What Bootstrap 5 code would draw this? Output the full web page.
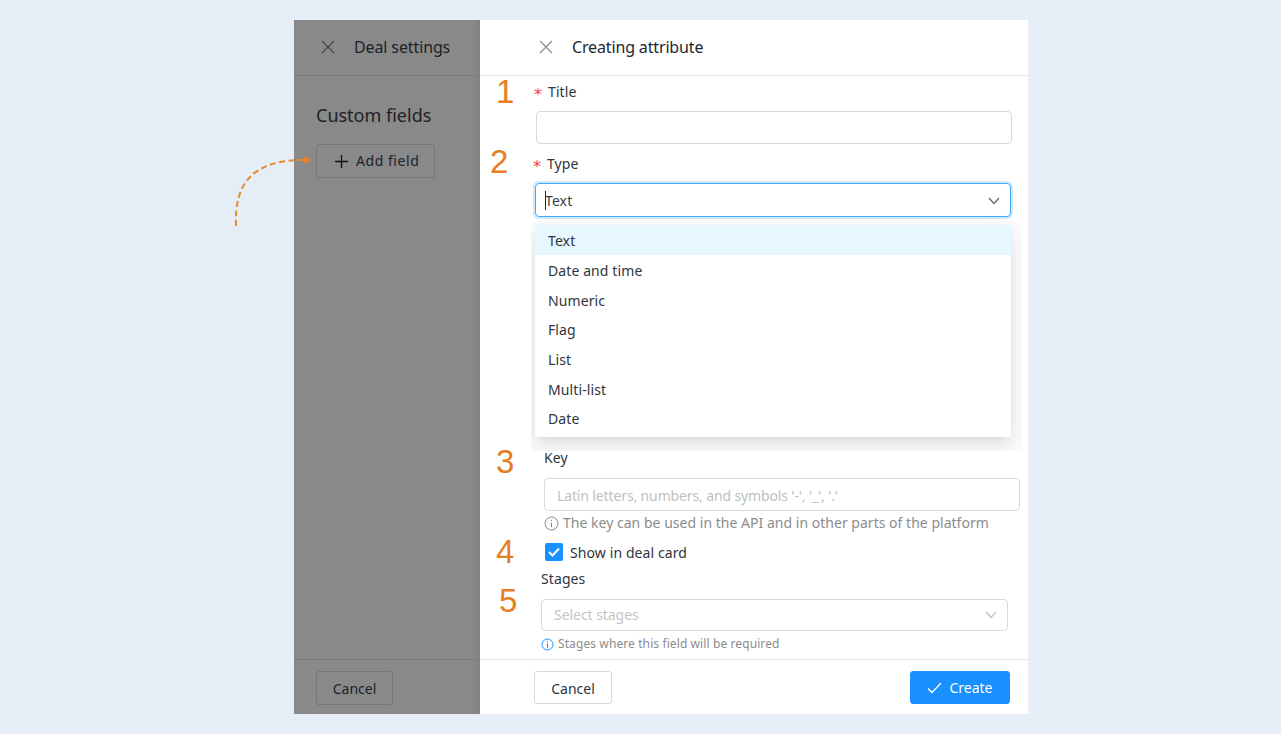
<!doctype html>
<html lang="en"><head><meta charset="utf-8"><title>Creating attribute</title>
<link href="https://cdn.jsdelivr.net/npm/bootstrap@5.3.0/dist/css/bootstrap.min.css" rel="stylesheet">
<style>
html,body{height:100%}
body{background:#e5edf7;font-family:"Noto Sans","Open Sans",sans-serif;font-size:14px;letter-spacing:.1px;color:#2b3038;overflow:hidden;position:relative}
.frame{margin:20px 0 0 294px;width:734px;height:694px}
.dim{width:186px;background:#898989;color:#1e2126;position:relative;box-shadow:inset -6px 0 8px -6px rgba(0,0,0,.12)}
.dimhead{height:56px;border-bottom:1px solid #7b7b7b;padding:0 0 2px 27px;gap:19px;font-size:16px;letter-spacing:-.12px}
.dimbody{padding:25px 22px 0;flex:1}
.dimtitle{font-size:18px;line-height:28px;margin:0 0 15px;font-weight:400;letter-spacing:0}
.btn-ghost{--bs-btn-border-color:#767676;--bs-btn-color:#1e2126;--bs-btn-hover-color:#1e2126;--bs-btn-hover-border-color:#767676;--bs-btn-border-radius:3px;--bs-btn-font-size:14px;--bs-btn-padding-y:0;height:34px;line-height:34px}
.addbtn{width:119px;padding:0 0 0 18px;gap:8px;letter-spacing:.55px}
.cancelbtn{width:77px;padding:0}
.dimfoot{height:55px;border-top:1px solid #7b7b7b;padding:11px 22px 0}
.panel{width:548px;background:#fff;position:relative}
.panelhead{height:56px;border-bottom:1px solid #e8e8e8;padding:0 0 2px 59px;gap:19px;font-size:16px;color:#23272e;letter-spacing:-.15px}
.formarea{flex:1;position:relative}
.req{color:#f5424d;font-family:"DejaVu Sans",sans-serif;font-size:16px;margin:0 6px 0 -2px;vertical-align:-3px;line-height:1;letter-spacing:0}
.lab{height:20px;line-height:22px;font-size:14px;color:#2f353d;margin:0}
.num{position:absolute;color:#e67e22;font-family:"Liberation Sans",sans-serif;font-size:33px;line-height:36px;letter-spacing:0}
.fieldbox{height:33px;border:1px solid #d9d9d9;border-radius:4px;background:#fff;padding:0 12px;line-height:33px;color:#bfbfbf}
.hintkey{letter-spacing:-.13px}
.sel1{margin-left:55px;width:476px;height:34px;border:1px solid #40a9ff;box-shadow:0 0 0 2px rgba(24,144,255,.2);border-radius:4px;padding:1px 10px 0 9px;color:#3a3f46}
.caret-bar{display:inline-block;width:1px;height:19px;background:#222;vertical-align:-4px;margin-right:-1px}
.menuclip{margin:3px 0 0 51px;width:491px;height:231px;overflow:hidden;padding:5px 15px 0 4px}
.menuwrap{width:476px;height:212px;background:#fff;box-shadow:0 3px 6px -4px rgba(0,0,0,.12),0 6px 16px rgba(0,0,0,.08),0 9px 28px 8px rgba(0,0,0,.05)}
.optrow{height:29.7px;line-height:31.7px;padding-left:13px;font-size:14px;color:#2f353d}
.optrow.on{background:#e6f7ff;height:30px}
.sub1{font-size:14px;color:#8c8c8c;line-height:22px;letter-spacing:.02px}
.sub2{font-size:12px;color:#8c8c8c;line-height:16px;letter-spacing:.1px}
.tick{width:18px;height:18px;background:#1890ff;border-radius:2px}
.panelfoot{height:55px;border-top:1px solid #e8e8e8;padding:11px 18px 0 54px}
.btn-plain{--bs-btn-border-color:#d9d9d9;--bs-btn-color:#2f353d;--bs-btn-hover-color:#2f353d;--bs-btn-hover-border-color:#d9d9d9;--bs-btn-border-radius:3px;--bs-btn-font-size:14px;--bs-btn-padding-y:0;--bs-btn-padding-x:0;width:78px;height:33px;line-height:33px}
.btn-go{--bs-btn-bg:#1890ff;--bs-btn-border-color:#1890ff;--bs-btn-color:#fff;--bs-btn-hover-bg:#1890ff;--bs-btn-hover-color:#fff;--bs-btn-hover-border-color:#1890ff;--bs-btn-border-radius:3px;--bs-btn-font-size:14px;--bs-btn-padding-y:0;--bs-btn-padding-x:0;width:100px;height:33px;gap:7px;line-height:33px}
.arrow{position:absolute;left:230px;top:152px;z-index:2}
.f-title{margin:5px 0 0 56px;width:476px}
.f-titlebox{margin-top:10px}
.f-typelab{margin:9px 0 10px 55px}
.f-key{margin:-3px 0 0 64px;width:476px}
.f-key .lab{margin-bottom:10px;line-height:20px}
.f-help{margin:2px 0 0 64px;gap:4px;height:20px}
.f-check{margin:10px 0 0 65px;gap:7px;height:18px;color:#2f353d}
.f-stages{margin:8px 0 0 61px;width:467px}
.f-stages .lab{margin-bottom:10px;line-height:20px}
.f-selbox{height:32px;line-height:32px;color:#c4c4c4;padding-right:10px;letter-spacing:-.05px}
.f-help2{margin:5px 0 0 61px;gap:4px;height:16px}
</style></head><body>
<svg class="arrow" width="90" height="80" viewBox="0 0 90 80" fill="none"><path d="M6 74C4 30 24 8 74 8" stroke="#e8892b" stroke-width="2" stroke-dasharray="6 3.5"/><path d="M74 4.5L82 8L74 11.5Z" fill="#e8892b"/></svg>
<div class="frame d-flex">
 <div class="dim d-flex flex-column">
  <div class="dimhead d-flex align-items-center"><svg width="14" height="14" viewBox="0 0 14 14" stroke="#4a4a4a" stroke-width="1.3"><path d="M1 1L13 13M13 1L1 13"/></svg><span>Deal settings</span></div>
  <div class="dimbody">
   <h2 class="dimtitle">Custom fields</h2>
   <button class="btn btn-ghost addbtn d-inline-flex align-items-center"><svg width="13" height="13" viewBox="0 0 13 13" stroke="#111" stroke-width="1.3"><path d="M6.5 0V13M0 6.5H13"/></svg><span>Add field</span></button>
  </div>
  <div class="dimfoot"><button class="btn btn-ghost cancelbtn">Cancel</button></div>
 </div>
 <div class="panel d-flex flex-column">
  <div class="panelhead d-flex align-items-center"><svg width="14" height="14" viewBox="0 0 14 14" stroke="#8c8c8c" stroke-width="1.3"><path d="M1 1L13 13M13 1L1 13"/></svg><span>Creating attribute</span></div>
  <div class="formarea">
   <span class="num" style="left:16px;top:-2px">1</span>
   <span class="num" style="left:10px;top:68px">2</span>
   <span class="num" style="left:16px;top:368px">3</span>
   <span class="num" style="left:16px;top:458px">4</span>
   <span class="num" style="left:19px;top:507px">5</span>
   <div class="f-title">
    <p class="lab"><span class="req">*</span>Title</p>
    <div class="fieldbox f-titlebox"></div>
   </div>
   <p class="lab f-typelab"><span class="req">*</span>Type</p>
   <div class="sel1 d-flex align-items-center justify-content-between"><span><span class="caret-bar"></span>Text</span><svg width="12" height="8" viewBox="0 0 12 8" fill="none" stroke="#666" stroke-width="1.2"><path d="M1 1L6 6.5L11 1"/></svg></div>
   <div class="menuclip"><div class="menuwrap">
    <div class="optrow on">Text</div><div class="optrow">Date and time</div><div class="optrow">Numeric</div><div class="optrow">Flag</div><div class="optrow">List</div><div class="optrow">Multi-list</div><div class="optrow">Date</div>
   </div></div>
   <div class="f-key"><p class="lab">Key</p><div class="fieldbox hintkey">Latin letters, numbers, and symbols '-', '_', '.'</div></div>
   <div class="f-help d-flex align-items-center sub1"><svg width="15" height="15" viewBox="0 0 15 15" fill="none" stroke="#8c8c8c"><circle cx="7.5" cy="7.5" r="6.5"/><path d="M7.5 6.500V11.200M7.5 3.800V5"/></svg><span>The key can be used in the API and in other parts of the platform</span></div>
   <div class="f-check d-flex align-items-center"><span class="tick d-flex align-items-center justify-content-center"><svg width="12" height="10" viewBox="0 0 12 10" fill="none" stroke="#fff" stroke-width="2"><path d="M1 5L4.5 8.500L11 1.500"/></svg></span><span>Show in deal card</span></div>
   <div class="f-stages"><p class="lab">Stages</p><div class="fieldbox f-selbox d-flex align-items-center justify-content-between"><span>Select stages</span><svg width="12" height="8" viewBox="0 0 12 8" fill="none" stroke="#bfbfbf" stroke-width="1.2"><path d="M1 1L6 6.500L11 1"/></svg></div></div>
   <div class="f-help2 d-flex align-items-center sub2"><svg width="13" height="13" viewBox="0 0 13 13" fill="none" stroke="#1890ff"><circle cx="6.500" cy="6.500" r="5.500"/><path d="M6.500 5.500V9.800M6.500 3V4.200"/></svg><span>Stages where this field will be required</span></div>
  </div>
  <div class="panelfoot d-flex justify-content-between align-items-start"><button class="btn btn-plain">Cancel</button><button class="btn btn-go d-flex align-items-center justify-content-center"><svg width="15" height="12" viewBox="0 0 15 12" fill="none" stroke="#fff" stroke-width="1.300"><path d="M1 6.500L5 10.500L14 1"/></svg><span>Create</span></button></div>
 </div>
</div>
</body></html>
